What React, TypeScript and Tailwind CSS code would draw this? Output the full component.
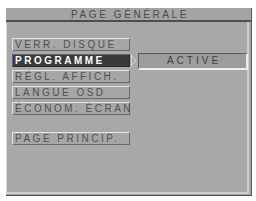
const items = ['VERR. DISQUE', 'PROGRAMME', 'RÉGL. AFFICH.', 'LANGUE OSD', 'ÉCONOM. ÉCRAN'];

function MenuItem({ label, active }: { label: string; active?: boolean }) {
  return (
    <div
      className={
        'h-[13px] w-[118px] flex items-center pl-[2px] whitespace-nowrap overflow-visible border-t border-l border-b border-r text-[10px] leading-none tracking-[2.5px] ' +
        (active
          ? 'bg-[#3a3a3a] text-white font-bold border-t-[#6a6a6a] border-l-[#6a6a6a] border-b-[#2a2a2a] border-r-[#2a2a2a]'
          : 'bg-[#a6a6a6] text-[#505050] border-t-[#e4e4e4] border-l-[#e4e4e4] border-b-[#6a6a6a] border-r-[#6a6a6a]')
      }
    >
      {label}
    </div>
  );
}

export default function App() {
  return (
    <div className="w-[256px] h-[201px] bg-white pt-[8px] pl-[6px]" style={{ fontFamily: '"Liberation Sans", Arial, sans-serif' }}>
      <div className="w-[246px] h-[188px] bg-[#a8a8a8] flex flex-col border-r border-b border-r-[#5a5a5a] border-b-[#4a4a4a]">
        <div className="h-[14px] flex items-center justify-center bg-[#a4a4a4] border-b-2 border-b-[#4e4e4e] text-[10px] leading-none tracking-[2.6px] text-[#4a4a4a] pl-[3px] pt-[1px]">
          PAGE GÉNÉRALE
        </div>
        <div className="flex-1 flex border-l border-l-[#d8d8d8] border-r-2 border-r-[#d0d0d0] border-b-2 border-b-[#cfcfcf] mr-[2px] mb-[1px]">
          <div className="flex flex-col pt-[16px] pl-[5px]">
            <div className="flex flex-col gap-[3px]">
              {items.map((label) => (
                <MenuItem key={label} label={label} active={label === 'PROGRAMME'} />
              ))}
            </div>
            <div className="mt-[17px]">
              <MenuItem label="PAGE PRINCIP." />
            </div>
          </div>
          <div className="flex items-start pt-[31px]">
            <svg width="6" height="13" viewBox="0 0 6 13" className="ml-[1px] mt-[1px]">
              <rect x="0" y="0" width="1" height="13" fill="#d6d6d6" />
              <path d="M1.5 2.5 L5 6.5 L1.5 10.5" fill="none" stroke="#dcdcdc" strokeWidth="1" />
            </svg>
            <div className="ml-[1px] w-[110px] h-[17px] bg-[#9c9c9c] border-t border-l border-b-2 border-r-2 border-t-[#5a5a5a] border-l-[#5a5a5a] border-b-[#ececec] border-r-[#ececec] flex items-center justify-center text-[10px] leading-none tracking-[3px] text-[#3e3e3e] pl-[3px]">
              ACTIVE
            </div>
          </div>
        </div>
      </div>
    </div>
  );
}
